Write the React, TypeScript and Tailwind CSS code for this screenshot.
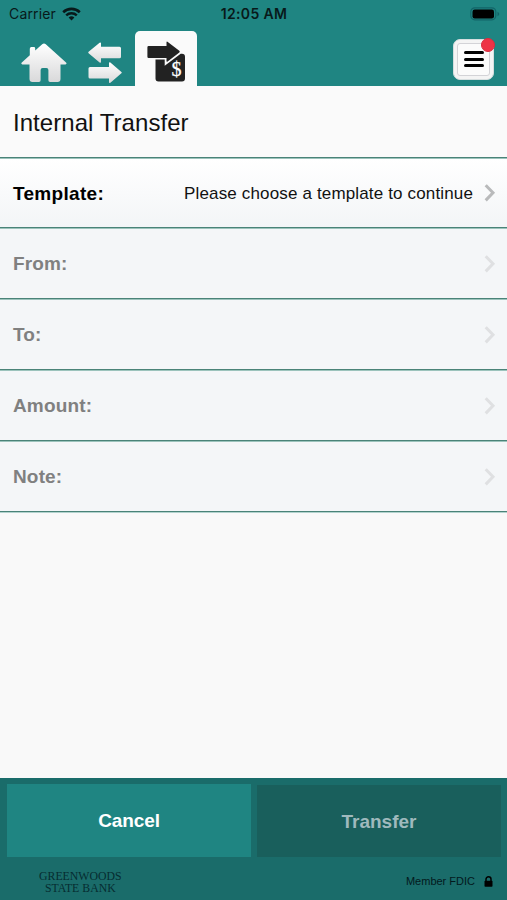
const fields = ["From:", "To:", "Amount:", "Note:"];

const StatusBar = () => (
  <div className="grid grid-cols-3 items-center h-7 pl-[9px] pr-[7px] font-['Inter',sans-serif] text-[#08191a]">
    <div className="flex items-center gap-x-[6px]">
      <span className="text-[14px] leading-none tracking-[0.15px]">Carrier</span>
      <svg width="19" height="14" viewBox="0 0 19 14" fill="none" stroke="currentColor">
        <path d="M1.2 5.2a12 12 0 0 1 16.6 0" strokeWidth="2.6" />
        <path d="M4.2 8.4a7.6 7.6 0 0 1 10.6 0" strokeWidth="2.4" />
        <path d="M9.5 13.6 6.6 10.6a4.2 4.2 0 0 1 5.8 0z" fill="currentColor" stroke="none" />
      </svg>
    </div>
    <span className="pr-px text-center text-[14px] leading-none font-semibold tracking-[0.35px]">
      12:05 AM
    </span>
    <svg className="justify-self-end" width="30" height="14" viewBox="0 0 30 14">
      <rect x="0.8" y="0.8" width="25" height="12" rx="4" fill="none" stroke="#136468" strokeWidth="1.2" />
      <rect x="2.5" y="2.5" width="21.5" height="9" rx="2.2" fill="#000" />
      <path d="M27.5 4.8v4.4q1.8-.8 1.8-2.2t-1.8-2.2" fill="#136468" />
    </svg>
  </div>
);

const HomeIcon = () => (
  <svg width="46" height="40" viewBox="0 0 46 40">
    <defs>
      <linearGradient id="silver" x1="0" y1="0" x2="0" y2="1">
        <stop offset="0" stopColor="#fff" />
        <stop offset="1" stopColor="#d9d9da" />
      </linearGradient>
    </defs>
    <path
      d="M21.2 1.2q1.800-1.400 3.600 0L45 19.500q1.300 1.400-.6 1.900H39.500v14.500q0 3-3 3H29q-1.600 0-1.600-1.600V27q0-2-2-2h-3.800q-2 0-2 2v10.300q0 1.600-1.600 1.600h-6.500q-3 0-3-3V21.400H1.400Q-.4 20.900.8 19.500l8-7.300V5.700q0-1.600 1.600-1.600h2.400q1.400 0 1.400 1.400v2z"
      fill="url(#silver)"
    />
  </svg>
);

const ArrowsIcon = () => (
  <svg width="34" height="42" viewBox="0 0 34 42">
    <path
      d="M.6 9.700 11.600.800q1.400-.8 1.400.8v3.200h18.500q1.500 0 1.500 1.500v8.500q0 1.500-1.500 1.500H13v3.400q0 1.700-1.400.8L.6 11.200q-.8-.7 0-1.500z"
      fill="url(#silver)"
    />
    <path
      d="M33.400 31.300 22.400 40.700q-1.400.8-1.400-.8v-3.400H2Q.5 36.500.5 35v-8.500Q.5 25 2 25h19v-3.600q0-1.700 1.400-.8l11 9.300q.8.700 0 1.400z"
      fill="url(#silver)"
    />
  </svg>
);

const TransferIcon = () => (
  <svg width="39" height="42" viewBox="0 0 39 42">
    <path
      d="M8.500 18.400h9.200v6.300L33.700 12.800h1.300q3 0 3 3v21.800q0 3-3 3H11.500q-3 0-3-3z"
      fill="#222"
    />
    <path
      d="M1.600 5h17.900V1.500q0-1.500 1.300-.6L32.300 9.800q1 .9 0 1.800L20.300 20.700q-.8.400-.8-.6V17H1.600Q.4 17 .4 15.800V6.300Q.4 5 1.600 5z"
      fill="#222"
    />
    <text
      x="29.400"
      y="35.400"
      textAnchor="middle"
      fontSize="20"
      fontFamily="Liberation Serif, serif"
      fill="#fff"
      stroke="#fff"
      strokeWidth=".25">
      $
    </text>
  </svg>
);

const MenuButton = () => (
  <button className="relative flex items-center justify-center size-[41px] rounded-[7px] bg-[#f4f4f4] border border-[#d5dedf]">
    <span className="flex flex-col items-center justify-center gap-y-[3.500px] size-[33px] pb-px rounded-[3px] border border-[#d3d3d7] bg-[#fbfbfb]">
      <span className="w-5 h-[3px] rounded-full bg-black"></span>
      <span className="w-5 h-[3px] rounded-full bg-black"></span>
      <span className="w-5 h-[3px] rounded-full bg-black"></span>
    </span>
    <span className="absolute -top-[2px] -right-[2px] size-[14px] rounded-full bg-[#ee3346] border border-[#d92c3e]"></span>
  </button>
);

const Chevron = ({ muted = false }: { muted?: boolean }) => (
  <svg
    className={muted ? "text-[#dfe0e2]" : "text-[#b9babb]"}
    width="12"
    height="18"
    viewBox="0 0 12 18"
    fill="none"
    stroke="currentColor"
    strokeWidth="3">
    <path d="m1.700 1.200 7.300 7.600-7.300 7.600" />
  </svg>
);

const App = () => {
  return (
    <div className="flex flex-col w-full h-[900px] bg-[#f9f9f9] font-['Liberation_Sans',Arial,sans-serif] overflow-hidden">
      <header className="h-[86px] shrink-0 bg-[#1f8582]">
        <StatusBar />
        <nav className="flex items-start h-[58px] pl-[21px] pr-[13px]">
          <div className="w-[67px] pt-[15px]">
            <HomeIcon />
          </div>
          <div className="w-[47px] pt-[14px]">
            <ArrowsIcon />
          </div>
          <div className="flex justify-center w-[62px] h-[55px] mt-[3px] pt-[10px] rounded-t-[5px] bg-[#fafafa]">
            <TransferIcon />
          </div>
          <div className="ml-auto pt-[11px]">
            <MenuButton />
          </div>
        </nav>
      </header>

      <h1 className="flex items-center h-[72px] shrink-0 px-[13px] pt-[3px] border-b border-[#4a8378] bg-[#fafafa] text-[24px] tracking-[0.05px] text-[#111]">
        Internal Transfer
      </h1>

      <div className="flex items-center h-[70px] shrink-0 pl-[13px] pr-[11px] border-t border-t-[#9cc3bc] border-b border-b-[#4a8378] bg-linear-to-b from-white to-[#f3f5f7]">
        <span className="pt-[3px] text-[19px] tracking-[0.3px] font-bold text-black">
          Template:
        </span>
        <span className="ml-auto mr-[11px] pt-[2px] text-[17px] tracking-[0.15px] text-[#111]">
          Please choose a template to continue
        </span>
        <Chevron />
      </div>
      {fields.map(label => (
        <div
          key={label}
          className="flex items-center justify-between h-[71px] shrink-0 pl-[13px] pr-[11px] border-t border-t-[#9cc3bc] border-b border-b-[#4a8378] bg-[#f4f6f8]">
          <span className="pt-[2px] text-[19px] tracking-[0.15px] font-bold text-[#808080]">
            {label}
          </span>
          <Chevron muted />
        </div>
      ))}
      <div className="h-px shrink-0 bg-[#b3d3ce]"></div>

      <footer className="mt-auto h-[122px] shrink-0 bg-[#1a6c6a]">
        <div className="flex gap-x-[6px] pl-[7px] pr-[6px] pt-[6px] text-[19px] font-bold">
          <button className="w-[244px] h-[73px] pt-[2px] bg-[#1f8582] tracking-[-0.1px] text-white">
            Cancel
          </button>
          <button className="flex-1 h-[72px] mt-px pt-[2px] bg-[#195f5c] text-[#9fb9bd]">
            Transfer
          </button>
        </div>
        <div className="flex items-center justify-between pl-[39px] pr-[14px] pt-[12px] text-[#062c31]">
          <div className="flex flex-col items-center pt-px font-['Liberation_Serif',serif] text-[11.800px] leading-[12px]">
            <span>GREENWOODS</span>
            <span>STATE BANK</span>
          </div>
          <div className="flex items-center gap-x-[9px] text-[11px] text-[#03191d]">
            <span>Member FDIC</span>
            <svg width="9" height="11" viewBox="0 0 9 11">
              <path d="M2 5V3.300a2.500 2.500 0 0 1 5 0V5" fill="none" stroke="#000" strokeWidth="1.500" />
              <rect x="0.500" y="4.700" width="8" height="6" rx="0.800" fill="#000" />
            </svg>
          </div>
        </div>
      </footer>
    </div>
  );
};

export default App;
